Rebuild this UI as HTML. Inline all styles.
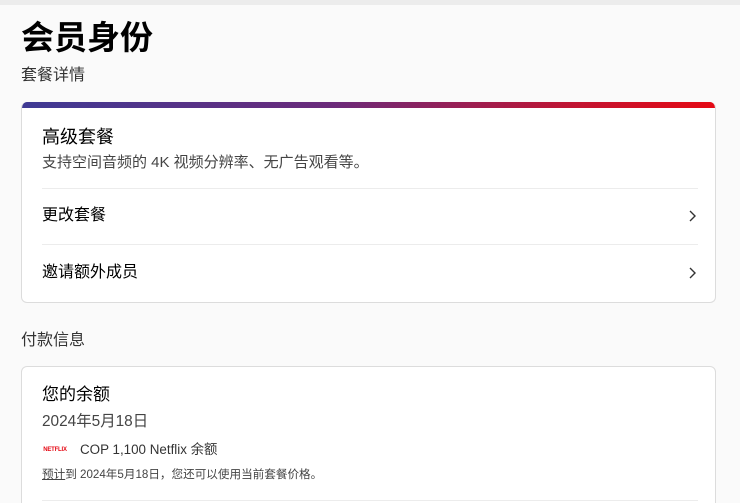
<!DOCTYPE html>
<html style="width:740px;height:503px;overflow:hidden"><head><meta charset="utf-8"><style>
*{margin:0;padding:0;box-sizing:border-box}
body{width:740px;height:503px;overflow:hidden;background:#fafafa;font-family:"Liberation Sans","Noto Sans CJK SC",sans-serif;color:#000;position:relative}
.top{position:absolute;left:0;top:0;width:740px;height:5px;background:#ececec}
.abs{position:absolute;white-space:nowrap}
.card{position:absolute;left:21px;width:695px;background:#fff;border:1px solid #dcdcdc;border-radius:6px;overflow:hidden}
.bar{position:absolute;left:0;top:0;width:100%;height:6px;background:linear-gradient(90deg,#3f3a94 0%,#6b2a7a 45%,#c21431 80%,#e50914 100%)}
.hr{position:absolute;left:20px;right:17px;height:1px;background:#ececec}
.chev{position:absolute;right:18px;width:10px;height:14px}
</style></head><body>
<div class="top"></div>
<div class="abs" style="left:21px;top:14px;font-size:33px;font-weight:bold;line-height:48px">会员身份</div>
<div class="abs" style="left:21px;top:65px;font-size:16px;color:#333;line-height:22px">套餐详情</div>
<div class="card" style="top:102px;height:201px;border-top:none">
  <div class="bar"></div>
  <div class="abs" style="left:20px;top:23px;font-size:18px;line-height:24px">高级套餐</div>
  <div class="abs" style="left:20px;top:50px;font-size:15px;color:#444;line-height:22px">支持空间音频的 4K 视频分辨率、无广告观看等。</div>
  <div class="hr" style="top:86px"></div>
  <div class="abs" style="left:20px;top:102px;font-size:16px;line-height:24px">更改套餐</div>
  <svg class="chev" style="top:107px" viewBox="0 0 10 14"><path d="M3 2l5 5-5 5" fill="none" stroke="#333" stroke-width="1.4"/></svg>
  <div class="hr" style="top:142px"></div>
  <div class="abs" style="left:20px;top:159px;font-size:16px;line-height:24px">邀请额外成员</div>
  <svg class="chev" style="top:164px" viewBox="0 0 10 14"><path d="M3 2l5 5-5 5" fill="none" stroke="#333" stroke-width="1.4"/></svg>
</div>
<div class="abs" style="left:21px;top:330px;font-size:16px;color:#333;line-height:22px">付款信息</div>
<div class="card" style="top:366px;height:160px">
  <div class="abs" style="left:20px;top:16px;font-size:17px;line-height:24px">您的余额</div>
  <div class="abs" style="left:20px;top:43px;font-size:15.4px;color:#444;line-height:24px">2024年5月18日</div>
  <div class="abs" style="left:19px;top:76px;width:28px;height:14px;background:#fff;font-size:6px;color:#e50914;font-weight:bold;line-height:14px;text-align:center;letter-spacing:-.2px">NETFLIX</div>
  <div class="abs" style="left:58px;top:73px;font-size:13.4px;color:#333;line-height:20px">COP 1,100 Netflix 余额</div>
  <div class="abs" style="left:20px;top:99px;font-size:11.6px;color:#444;line-height:18px"><span style="text-decoration:underline">预计</span>到 2024年5月18日，您还可以使用当前套餐价格。</div>
  <div class="hr" style="top:133px"></div>
</div>
</body></html>
